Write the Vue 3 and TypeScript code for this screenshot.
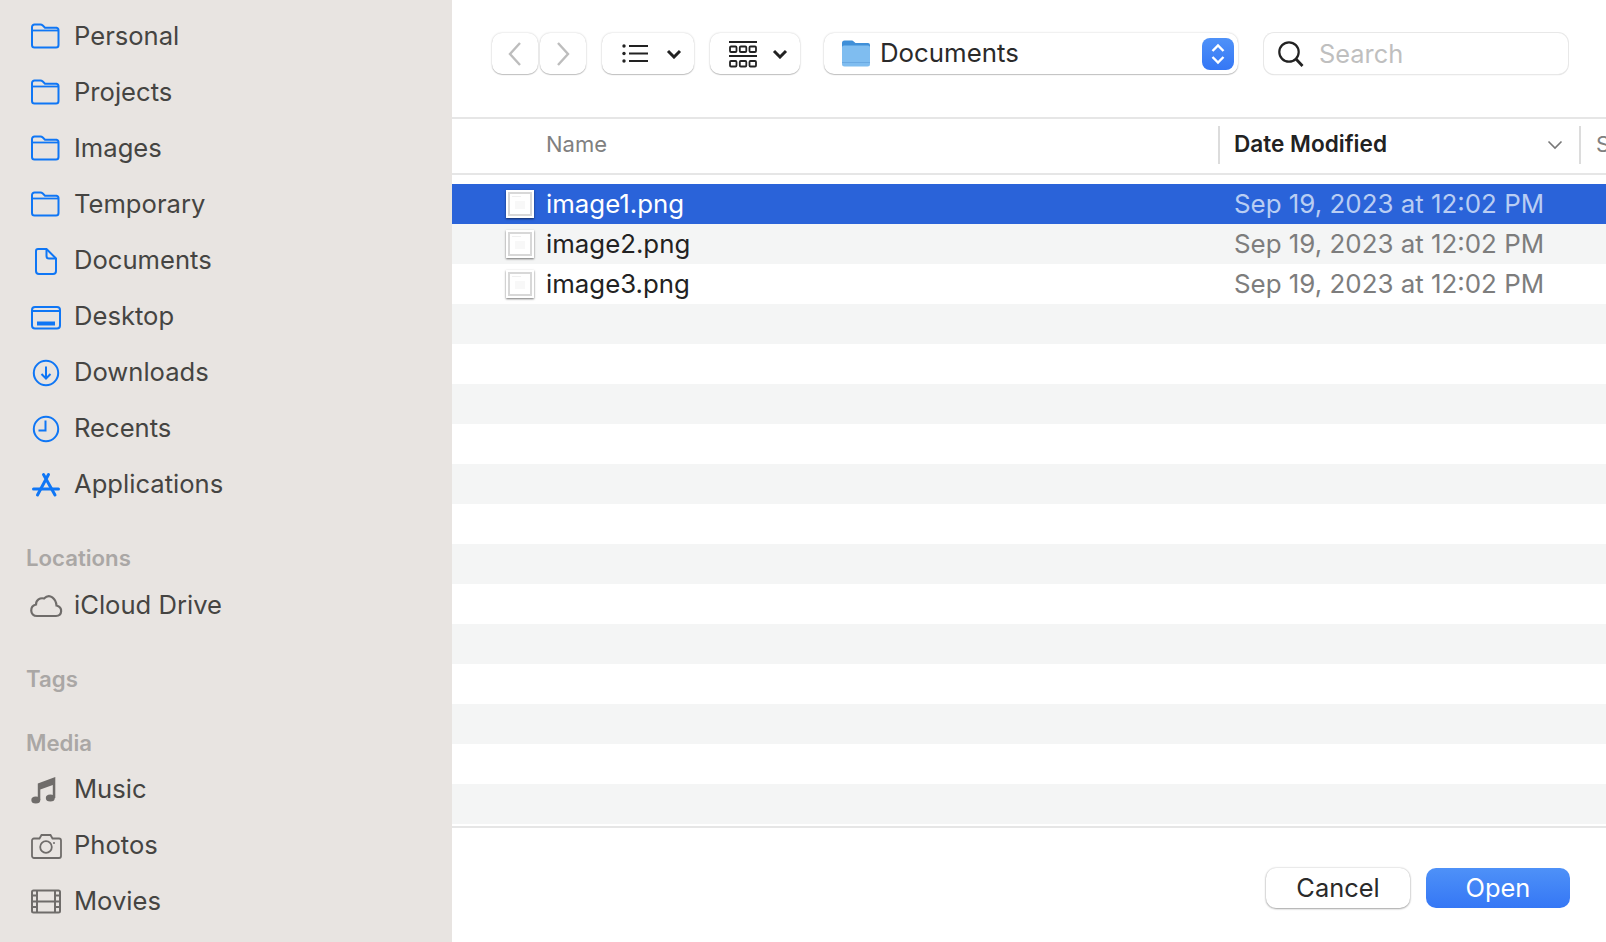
<template>
  <div class="dialog">
    <aside class="sidebar">
      <template v-for="group in sidebar" :key="group.title">
        <h3 v-if="group.title" class="side-title" :class="group.cls">{{ group.title }}</h3>
        <div v-for="item in group.items" :key="item.label" class="side-item">
          <svg class="side-icon" :class="item.tone" width="34" height="32" viewBox="0 0 34 32">
            <g v-if="item.icon === 'folder'" fill="none" stroke="currentColor" stroke-width="2">
              <path d="M3 25V7a2.500 2.500 0 0 1 2.500-2.500h6c1 0 1.600.4 2.300 1l2.200 2.200h11.500A2.500 2.500 0 0 1 29.500 10.200V25a2.500 2.500 0 0 1-2.500 2.500H5.500A2.500 2.500 0 0 1 3 25Z" />
              <path d="M3 10.500h26" stroke-width="1.800" />
            </g>
            <g v-else-if="item.icon === 'doc'" fill="none" stroke="currentColor" stroke-width="2">
              <path d="M9 5h8.500L27 14.500V27a3 3 0 0 1-3 3H10a3 3 0 0 1-3-3V7a2 2 0 0 1 2-2Z" />
              <path d="M17.500 5v7a2.500 2.500 0 0 0 2.500 2.500h7" />
            </g>
            <g v-else-if="item.icon === 'desktop'">
              <rect x="3" y="7" width="28" height="21.500" rx="3" fill="none" stroke="currentColor" stroke-width="2" />
              <path d="M3 11h28" stroke="currentColor" stroke-width="2" />
              <rect x="8" y="21.500" width="18" height="4" fill="currentColor" />
            </g>
            <g v-else-if="item.icon === 'download'" fill="none" stroke="currentColor" stroke-width="2">
              <circle cx="17" cy="17" r="12.200" />
              <path d="M17 10.500v12M12.500 18l4.500 4.500 4.500-4.500" />
            </g>
            <g v-else-if="item.icon === 'recent'" fill="none" stroke="currentColor" stroke-width="2">
              <circle cx="17" cy="17" r="12.200" />
              <path d="M16.500 8.500v10H9.500" />
            </g>
            <g v-else-if="item.icon === 'apps'" fill="none" stroke="currentColor" stroke-width="3" stroke-linecap="round">
              <path d="M14.500 6.500 26 27M19.500 6.500 8.500 27" />
              <path d="M4.500 21h25" />
            </g>
            <g v-else-if="item.icon === 'cloud'" fill="none" stroke="currentColor" stroke-width="2.200">
              <path d="M8 27h19c6.500 0 7-9 .5-10.500C27 10 21 3.500 15 9.500 11 8.500 7 11 7 15.500.5 17 .5 27 8 27Z" />
            </g>
            <g v-else-if="item.icon === 'music'" fill="currentColor">
              <ellipse cx="6.800" cy="27" rx="4.500" ry="3.600" />
              <ellipse cx="21.300" cy="25" rx="4.500" ry="3.600" />
              <path d="M8.800 27V10.500L26.300 4v21h-2.500V12l-12.500 4.500V27Z" />
            </g>
            <g v-else-if="item.icon === 'camera'" fill="none" stroke="currentColor" stroke-width="1.800">
              <path d="M3 11.500a2 2 0 0 1 2-2h5.500l2-3.500h9l2 3.500H30a2 2 0 0 1 2 2V27a2 2 0 0 1-2 2H5a2 2 0 0 1-2-2Z" />
              <circle cx="17" cy="18" r="5.800" />
              <circle cx="25" cy="14" r="1" fill="currentColor" stroke="none" />
            </g>
            <g v-else fill="none" stroke="currentColor" stroke-width="2">
              <rect x="3" y="5.500" width="28" height="22" rx="1.500" />
              <path d="M8 5.500v22M26 5.500v22M8 16.500h18M3 10.500h5M3 16.500h5M3 22h5M26 10.500h5M26 16.500h5M26 22h5" />
            </g>
          </svg>
          <span class="side-label">{{ item.label }}</span>
        </div>
      </template>
    </aside>

    <main class="main">
      <header class="toolbar">
        <div class="nav-pair">
          <button class="tool-btn nav-btn">
            <svg width="16" height="26" viewBox="0 0 16 26"><path d="M13 2 3 13l10 11" fill="none" stroke="#bdbdbd" stroke-width="2.400" /></svg>
          </button>
          <button class="tool-btn nav-btn">
            <svg width="16" height="26" viewBox="0 0 16 26"><path d="m3 2 10 11L3 24" fill="none" stroke="#bdbdbd" stroke-width="2.400" /></svg>
          </button>
        </div>
        <button class="tool-btn view-btn list-btn">
          <svg width="26" height="22" viewBox="0 0 26 22">
            <g fill="#222"><circle cx="2" cy="3" r="1.700" /><circle cx="2" cy="10.500" r="1.700" /><circle cx="2" cy="18" r="1.700" /></g>
            <path d="M7 3h19M7 10.500h19M7 18h19" stroke="#222" stroke-width="2" />
          </svg>
          <svg class="chev" width="16" height="10" viewBox="0 0 16 10"><path d="m2 2 6 6 6-6" fill="none" stroke="#222" stroke-width="3" /></svg>
        </button>
        <button class="tool-btn view-btn grid-btn">
          <svg width="28" height="28" viewBox="0 0 28 28">
            <path d="M0 2h28M0 16h28" stroke="#222" stroke-width="1.800" />
            <g fill="none" stroke="#222" stroke-width="1.800">
              <rect x="1" y="6.500" width="6.500" height="5.500" rx="1" /><rect x="10.800" y="6.500" width="6.500" height="5.500" rx="1" /><rect x="20.500" y="6.500" width="6.500" height="5.500" rx="1" />
              <rect x="1" y="21" width="6.500" height="5.500" rx="1" /><rect x="10.800" y="21" width="6.500" height="5.500" rx="1" /><rect x="20.500" y="21" width="6.500" height="5.500" rx="1" />
            </g>
          </svg>
          <svg class="chev" width="16" height="10" viewBox="0 0 16 10"><path d="m2 2 6 6 6-6" fill="none" stroke="#222" stroke-width="3" /></svg>
        </button>
        <div class="tool-btn path-popup">
          <svg class="path-folder" width="28" height="27" viewBox="0 0 28 27">
            <path d="M0 3a2.500 2.500 0 0 1 2.500-2.500h7c1 0 1.500.4 2.200 1l1.800 1.500H26a2 2 0 0 1 2 2V12H0Z" fill="#3f8fd8" />
            <path d="M0 7.500a2 2 0 0 1 2-2h24a2 2 0 0 1 2 2V24a2.500 2.500 0 0 1-2.500 2.500h-23A2.500 2.500 0 0 1 0 24Z" fill="#7fbdf0" />
            <path d="M0 22.500h28" stroke="#6aa9e2" stroke-width="1" />
          </svg>
          <span class="path-name">Documents</span>
          <span class="stepper">
            <svg width="16" height="24" viewBox="0 0 16 24"><path d="m2.500 9 5.500-5.500L13.500 9M2.500 15 8 20.500l5.500-5.500" fill="none" stroke="#fff" stroke-width="2.400" /></svg>
          </span>
        </div>
        <div class="tool-btn search-box">
          <svg width="28" height="28" viewBox="0 0 28 28"><circle cx="12" cy="12" r="9.700" fill="none" stroke="#222" stroke-width="2.200" /><path d="m19 19 6.500 7" stroke="#222" stroke-width="2.800" /></svg>
          <span class="search-hint">Search</span>
        </div>
      </header>

      <div class="list-head">
        <div class="col-name">Name</div>
        <div class="col-date">
          <span class="col-date-label">Date Modified</span>
          <svg width="16" height="10" viewBox="0 0 16 10"><path d="m1.500 1.500 6.500 6.500 6.500-6.500" fill="none" stroke="#777" stroke-width="1.600" /></svg>
        </div>
        <div class="col-size">Size</div>
      </div>

      <div class="rows">
        <div
          v-for="(row, i) in rows"
          :key="i"
          class="row"
          :class="{ selected: i === 0, striped: i % 2 === 1 }"
        >
          <template v-if="row">
            <span class="thumb"><span class="thumb-inner"></span></span>
            <span class="file-name">{{ row.name }}</span>
            <span class="file-date">{{ row.date }}</span>
          </template>
        </div>
      </div>

      <footer class="footer">
        <button class="foot-btn cancel">Cancel</button>
        <button class="foot-btn open">Open</button>
      </footer>
    </main>
  </div>
</template>

<script setup lang="ts">
interface SideItem {
  label: string
  icon: string
  tone: string
}

interface SideGroup {
  title: string
  cls: string
  items: SideItem[]
}

const blue = 'tone-blue'
const gray = 'tone-gray'

const sidebar: SideGroup[] = [
  {
    title: '',
    cls: '',
    items: [
      { label: 'Personal', icon: 'folder', tone: blue },
      { label: 'Projects', icon: 'folder', tone: blue },
      { label: 'Images', icon: 'folder', tone: blue },
      { label: 'Temporary', icon: 'folder', tone: blue },
      { label: 'Documents', icon: 'doc', tone: blue },
      { label: 'Desktop', icon: 'desktop', tone: blue },
      { label: 'Downloads', icon: 'download', tone: blue },
      { label: 'Recents', icon: 'recent', tone: blue },
      { label: 'Applications', icon: 'apps', tone: blue }
    ]
  },
  {
    title: 'Locations',
    cls: 'title-locations',
    items: [{ label: 'iCloud Drive', icon: 'cloud', tone: gray }]
  },
  { title: 'Tags', cls: 'title-tags', items: [] },
  {
    title: 'Media',
    cls: 'title-media',
    items: [
      { label: 'Music', icon: 'music', tone: gray },
      { label: 'Photos', icon: 'camera', tone: gray },
      { label: 'Movies', icon: 'film', tone: gray }
    ]
  }
]

const files = [
  { name: 'image1.png', date: 'Sep 19, 2023 at 12:02 PM' },
  { name: 'image2.png', date: 'Sep 19, 2023 at 12:02 PM' },
  { name: 'image3.png', date: 'Sep 19, 2023 at 12:02 PM' }
]

const rows = Array.from({ length: 16 }, (_, i) => files[i] ?? null)
</script>

<style>
html,
body {
  margin: 0;
  overflow: hidden;
  background: #fff;
}
</style>

<style scoped>
.dialog {
  display: flex;
  width: 1606px;
  height: 942px;
  overflow: hidden;
  font-family: Inter, "Liberation Sans", sans-serif;
  color: #222;
}

.sidebar {
  flex: 0 0 452px;
  box-sizing: border-box;
  padding-top: 8px;
  background: #e8e4e1;
}

.side-item {
  display: flex;
  align-items: center;
  height: 56px;
  padding-left: 29px;
}

.side-icon {
  flex: none;
  margin-right: 11px;
}

.tone-blue {
  color: #0f76f5;
}

.tone-gray {
  color: #6f6c6a;
}

.side-label {
  padding-bottom: 2px;
  font-size: 25.600px;
  color: #454442;
}

.side-title {
  margin: 0;
  padding-left: 26px;
  font-size: 22.200px;
  line-height: 26px;
  font-weight: 600;
  color: #aaa7a5;
}

.title-locations {
  margin-top: 33px;
  margin-bottom: 6px;
}

.title-tags {
  margin-top: 33px;
}

.title-media {
  margin-top: 38px;
  margin-bottom: 5px;
}

.main {
  flex: 1;
  min-width: 0;
  display: flex;
  flex-direction: column;
}

.toolbar {
  display: flex;
  align-items: flex-start;
  height: 117px;
  box-sizing: border-box;
  padding: 33px 0 0 40px;
}

.tool-btn {
  height: 41px;
  box-sizing: border-box;
  padding: 0;
  border: 0;
  border-radius: 10px;
  background: #fff;
  box-shadow: 0 0 2px rgba(0, 0, 0, 0.22), 0 1px 1px rgba(0, 0, 0, 0.2);
  display: flex;
  align-items: center;
}

.nav-pair {
  display: flex;
  gap: 2px;
}

.nav-btn {
  width: 46px;
  justify-content: center;
}

.view-btn {
  margin-left: 16px;
  justify-content: flex-start;
}

.list-btn {
  width: 92px;
  padding-left: 20px;
}

.grid-btn {
  width: 90px;
  padding-left: 19px;
}

.chev {
  margin-left: auto;
  margin-right: 12px;
}

.path-popup {
  width: 414px;
  margin-left: 24px;
  padding-left: 18px;
}

.path-name {
  margin-left: 10px;
  padding-bottom: 2px;
  font-size: 25.800px;
  color: #2a2a2a;
}

.stepper {
  margin-left: auto;
  margin-right: 4px;
  width: 32px;
  height: 32px;
  border-radius: 8px;
  background: linear-gradient(#4e91f8, #3577f5);
  display: flex;
  align-items: center;
  justify-content: center;
}

.search-box {
  width: 304px;
  margin-left: 26px;
  padding-left: 13px;
  box-shadow: 0 0 0 1px #e8e8e8, 0 1px 1px rgba(0, 0, 0, 0.25);
}

.search-hint {
  margin-left: 14px;
  font-size: 25.400px;
  color: #bfbfbf;
}

.list-head {
  display: flex;
  height: 58px;
  box-sizing: border-box;
  align-items: center;
  padding-bottom: 2px;
  border-top: 2px solid #e6e6e6;
  border-bottom: 2px solid #e6e6e6;
  overflow: hidden;
}

.col-name {
  flex: 0 0 766px;
  box-sizing: border-box;
  padding: 0 0 2px 94px;
  font-size: 22px;
  color: #808080;
}

.col-date {
  flex: 0 0 363px;
  height: 38px;
  box-sizing: border-box;
  display: flex;
  align-items: center;
  justify-content: space-between;
  padding: 0 16px 0 14px;
  border-left: 2px solid #dcdcdc;
  border-right: 2px solid #dcdcdc;
  font-size: 22.600px;
  font-weight: 600;
}

.col-date-label {
  padding-bottom: 4px;
}

.col-size {
  flex: none;
  padding: 0 0 2px 15px;
  font-size: 22px;
  color: #808080;
}

.rows {
  margin-top: 9px;
}

.row {
  display: flex;
  align-items: center;
  height: 40px;
  padding-left: 54px;
  font-size: 25.800px;
}

.striped {
  background: #f4f5f5;
}

.thumb {
  flex: none;
  width: 28px;
  height: 28px;
  box-sizing: border-box;
  padding: 2px;
  background: #fff;
  box-shadow: 0 1px 2px rgba(0, 0, 0, 0.55);
}

.thumb-inner {
  display: block;
  height: 100%;
  box-sizing: border-box;
  border: 2px solid #d8d8d8;
  background:
    linear-gradient(#f0f0f0, #f0f0f0) 2px 2px / 9px 1px no-repeat,
    linear-gradient(#f8f8f8, #f8f8f8) 5px 7px / 10px 8px no-repeat,
    #fff;
}

.file-name {
  flex: 0 0 673px;
  margin-left: 12px;
  padding-bottom: 2px;
}

.file-date {
  margin-left: 15px;
  padding-bottom: 2px;
  font-size: 25.900px;
  color: #7d7d7d;
  white-space: nowrap;
}

.selected {
  background: #2a63d9;
  color: #fff;
}

.selected .file-date {
  color: #b9cdf3;
}

.footer {
  flex: 1;
  margin-top: 2px;
  display: flex;
  justify-content: flex-end;
  gap: 16px;
  padding: 40px 36px 0 0;
  border-top: 2px solid #e6e6e6;
}

.foot-btn {
  width: 144px;
  height: 40px;
  padding: 0 0 2px;
  border: 0;
  border-radius: 10px;
  font-family: inherit;
  font-size: 25.400px;
}

.cancel {
  background: #fff;
  color: #2a2a2a;
  box-shadow: 0 0 2px rgba(0, 0, 0, 0.25), 0 1px 2px rgba(0, 0, 0, 0.3);
}

.open {
  background: linear-gradient(#4e91f8, #3577f5);
  color: #fff;
}
</style>
